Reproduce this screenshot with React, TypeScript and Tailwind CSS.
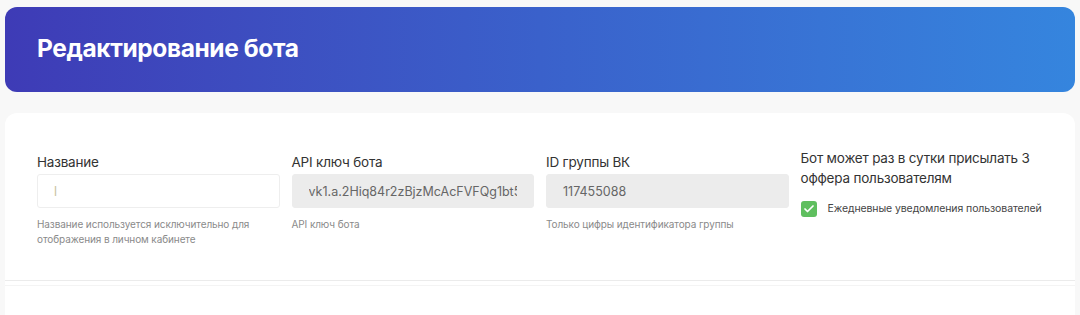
import { Check } from 'lucide-react'

const font = { fontFamily: 'Inter, "Noto Sans", sans-serif' }

function Field({
  label,
  value,
  hint,
  disabled,
}: {
  label: string
  value: string
  hint: string
  disabled?: boolean
}) {
  return (
    <div className="flex flex-col">
      <label className="text-[13.5px] leading-5 text-[#333] mb-[2px] mt-[1px] tracking-[-0.2px]">{label}</label>
      <input
        readOnly
        value={value}
        className={
          'h-[34px] w-full rounded-[3px] px-[16px] text-[12.5px] outline-none overflow-hidden ' +
          (disabled
            ? 'bg-[#ececec] text-[#666] border border-[#ececec]'
            : 'bg-white text-[#c8c2a0] border border-[#eeeeee]')
        }
      />
      <p className="mt-[9px] text-[10px] leading-[15px] text-[#8a8a8a] tracking-[-0.1px]">{hint}</p>
    </div>
  )
}

export default function App() {
  return (
    <div className="min-h-[315px] bg-[#f8f8f8] px-[5px] pt-[7px]" style={font}>
      <div className="h-[85px] rounded-[12px] bg-gradient-to-r from-[#3e3bb6] via-[#3a61cb] to-[#3585de] flex items-center px-[32px]">
        <h1 className="text-[24.5px] font-bold text-white tracking-[-0.4px] mt-[-2px]">Редактирование бота</h1>
      </div>

      <div className="mt-[21px] rounded-t-[12px] bg-white">
        <div className="grid grid-cols-4 gap-x-[12px] px-[32px] pt-[38px] pb-[33px] border-b border-[#ebebeb]">
          <Field
            label="Название"
            value="l"
            hint="Название используется исключительно для отображения в личном кабинете"
          />
          <Field
            label="API ключ бота"
            value="vk1.a.2Hiq84r2zBjzMcAcFVFQg1bt5ONDjQ3kLmNx"
            hint="API ключ бота"
            disabled
          />
          <Field
            label="ID группы ВК"
            value="117455088"
            hint="Только цифры идентификатора группы"
            disabled
          />
          <div className="flex flex-col">
            <p className="text-[13.5px] leading-[20px] text-[#333] mt-[-3px] tracking-[-0.2px]">
              Бот может раз в сутки присылать 3 оффера пользователям
            </p>
            <label className="flex items-center gap-[11px] mt-[13px]">
              <span className="w-[16px] h-[16px] rounded-[3px] bg-[#5fbf5f] flex items-center justify-center shrink-0">
                <Check className="w-[12px] h-[12px] text-white" strokeWidth={3.5} />
              </span>
              <span className="text-[10.5px] text-[#444] whitespace-nowrap tracking-[-0.1px]">
                Ежедневные уведомления пользователей
              </span>
            </label>
          </div>
        </div>
        <div className="h-[36px] border-t border-[#f4f4f4] mt-[4px]" />
      </div>
    </div>
  )
}
